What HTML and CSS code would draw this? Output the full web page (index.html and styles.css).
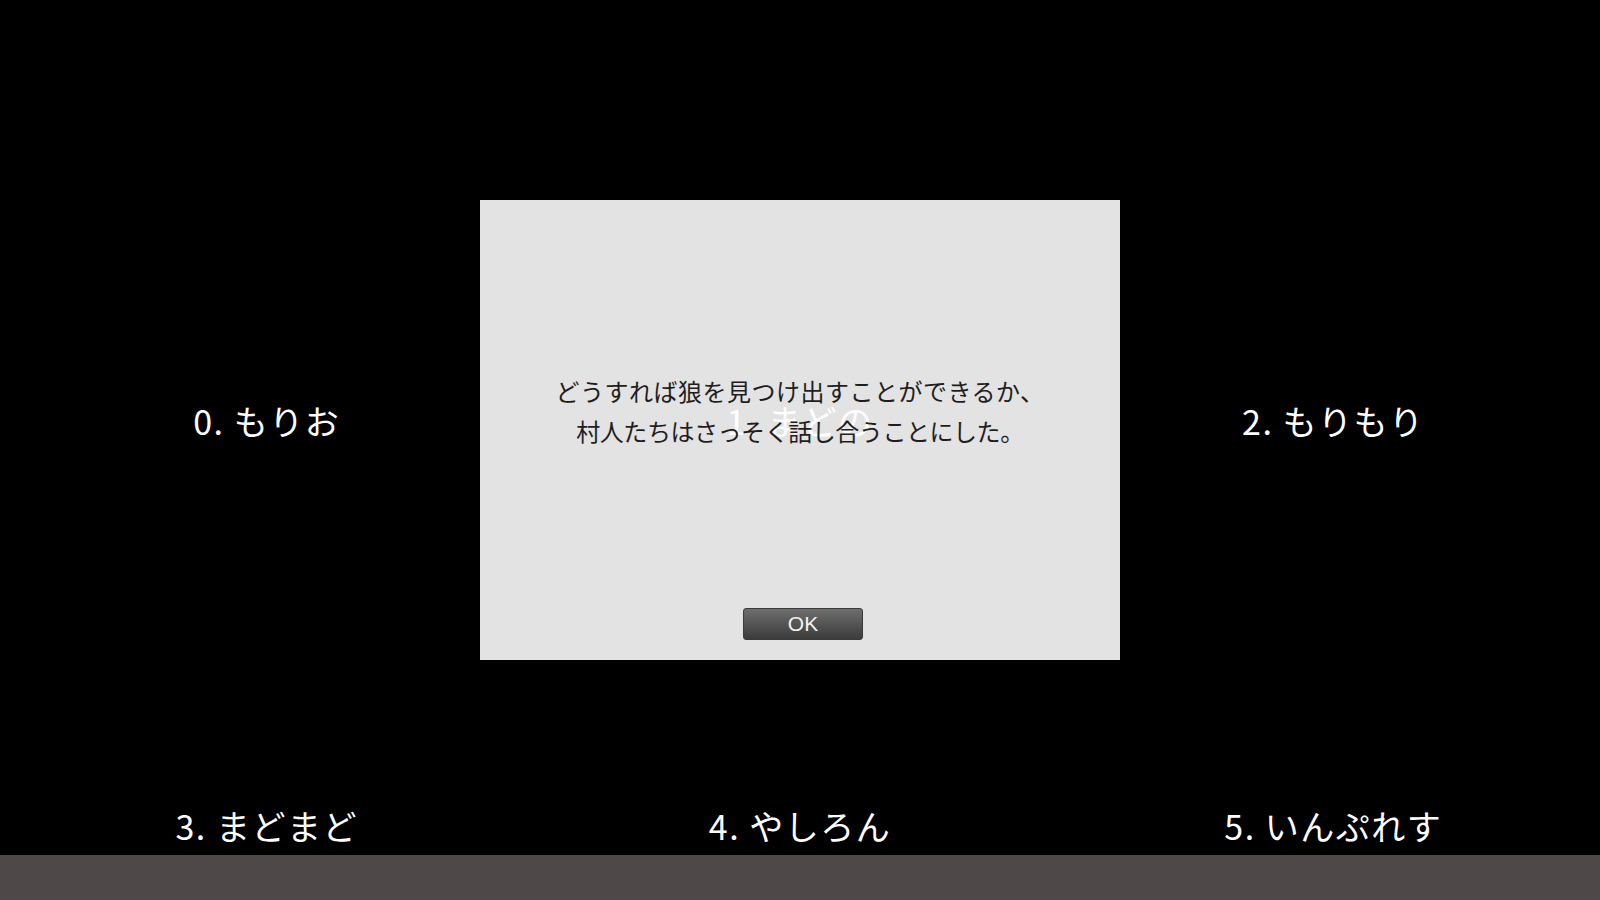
FILE: index.html
```html
<!DOCTYPE html>
<html lang="ja">
<head>
<meta charset="utf-8">
<title>人狼</title>
<link rel="stylesheet" href="styles.css">
</head>
<body>
<div class="screen">
  <div class="players">
    <div class="player">0. もりお</div>
    <div class="player">1. まどの</div>
    <div class="player">2. もりもり</div>
    <div class="player low">3. まどまど</div>
    <div class="player low">4. やしろん</div>
    <div class="player low">5. いんぷれす</div>
  </div>
  <div class="bottombar"></div>
  <div class="dialog">
    <div class="message"><span class="line1">どうすれば狼を見つけ出すことができるか、</span><br><span class="line2">村人たちはさっそく話し合うことにした。</span></div>
    <div class="actions"><button class="ok">OK</button></div>
  </div>
</div>
</body>
</html>
```
FILE: styles.css
```css
html, body {
  margin: 0;
  padding: 0;
  background: #000;
}
.screen {
  position: relative;
  width: 1600px;
  height: 900px;
  overflow: hidden;
  background: #000;
  font-family: "Noto Sans CJK JP", "Noto Sans", sans-serif;
}
.players {
  height: 855px;
  display: grid;
  grid-template-columns: 1fr 1fr 1fr;
  grid-template-rows: 442px 1fr;
  align-items: end;
}
.player {
  color: #fff;
  font-size: 34px;
  line-height: 42px;
  letter-spacing: 1.5px;
  text-align: center;
}
.player.low {
  padding-bottom: 8px;
}
.bottombar {
  height: 45px;
  background: #4f4848;
}
.dialog {
  position: absolute;
  left: 480px;
  top: 200px;
  width: 640px;
  height: 460px;
  background: rgba(255, 255, 255, 0.892);
  display: flex;
  flex-direction: column;
}
.message {
  margin-top: 171px;
  font-size: 24px;
  line-height: 40px;
  color: #1e1e1e;
  text-align: center;
}
.line1 {
  letter-spacing: 0.5px;
}
.line2 {
  letter-spacing: -0.45px;
}
.actions {
  margin-top: auto;
  margin-bottom: 20px;
  display: flex;
  justify-content: center;
  padding-left: 6px;
}
.ok {
  width: 120px;
  height: 32px;
  border: 1px solid #3a3a3a;
  border-radius: 3px;
  background: linear-gradient(#6e6e6e, #3b3b3b);
  color: #f2f2f2;
  font-family: "Liberation Sans", Arial, sans-serif;
  font-size: 21px;
  line-height: 30px;
  padding: 0;
}
```
